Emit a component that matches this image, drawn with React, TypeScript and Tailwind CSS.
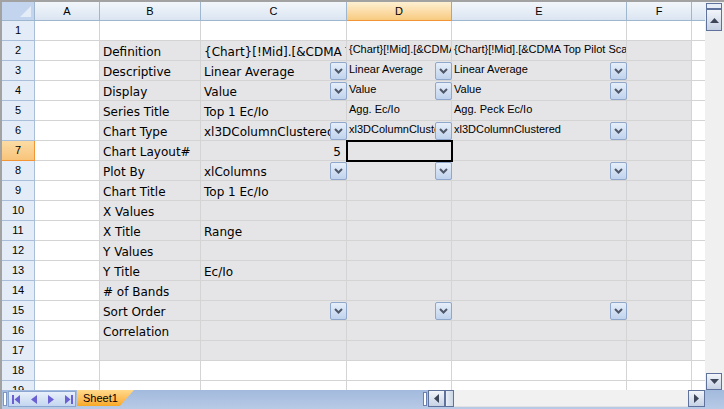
import React from "react";

type Cell = { t?: string; dd?: boolean; sm?: boolean; right?: boolean };

const W: Record<string, string> = {
  A: "w-[65px]",
  B: "w-[101px]",
  C: "w-[146px]",
  D: "w-[105px]",
  E: "w-[175px]",
  F: "w-[65px]",
};
const COLS = ["A", "B", "C", "D", "E", "F"];

const SPEC = "{Chart}[!Mid].[&CDMA Top Pilot Scan]";

const data: Record<number, Record<string, Cell>> = {
  2: { B: { t: "Definition" }, C: { t: SPEC }, D: { t: SPEC, sm: true }, E: { t: SPEC, sm: true } },
  3: {
    B: { t: "Descriptive" },
    C: { t: "Linear Average", dd: true },
    D: { t: "Linear Average", sm: true, dd: true },
    E: { t: "Linear Average", sm: true, dd: true },
  },
  4: {
    B: { t: "Display" },
    C: { t: "Value", dd: true },
    D: { t: "Value", sm: true, dd: true },
    E: { t: "Value", sm: true, dd: true },
  },
  5: {
    B: { t: "Series Title" },
    C: { t: "Top 1 Ec/Io" },
    D: { t: "Agg. Ec/Io", sm: true },
    E: { t: "Agg. Peck Ec/Io", sm: true },
  },
  6: {
    B: { t: "Chart Type" },
    C: { t: "xl3DColumnClustered", dd: true },
    D: { t: "xl3DColumnClustered", sm: true, dd: true },
    E: { t: "xl3DColumnClustered", sm: true, dd: true },
  },
  7: { B: { t: "Chart Layout#" }, C: { t: "5", right: true } },
  8: { B: { t: "Plot By" }, C: { t: "xlColumns", dd: true }, D: { dd: true }, E: { dd: true } },
  9: { B: { t: "Chart Title" }, C: { t: "Top 1 Ec/Io" } },
  10: { B: { t: "X Values" } },
  11: { B: { t: "X Title" }, C: { t: "Range" } },
  12: { B: { t: "Y Values" } },
  13: { B: { t: "Y Title" }, C: { t: "Ec/Io" } },
  14: { B: { t: "# of Bands" } },
  15: { B: { t: "Sort Order" }, C: { dd: true }, D: { dd: true }, E: { dd: true } },
  16: { B: { t: "Correlation" } },
  17: {},
};

function Dropdown() {
  return (
    <div className="absolute right-[-1px] top-[1px] z-10 flex h-[18px] w-[17px] items-center justify-center rounded-[2px] border border-[#8ea7cb] bg-linear-to-b from-[#e6eef9] to-[#c0d3ed]">
      <svg width="9" height="6" viewBox="0 0 9 6">
        <path d="M1 1 L4.5 4.5 L8 1" stroke="#4f5869" strokeWidth="2" fill="none" />
      </svg>
    </div>
  );
}

function GridCell({ col, row }: { col: string; row: number }) {
  const gray = row >= 2 && row <= 17 && col !== "A";
  const cell = data[row]?.[col];
  const sel = row === 7 && col === "D";
  return (
    <div
      className={`relative flex h-full shrink-0 border-b border-r border-[#d4d4d4] ${W[col]} ${
        gray ? "bg-[#e5e5e7]" : "bg-white"
      }`}
    >
      {cell?.t &&
        (cell.sm ? (
          <div className="w-full overflow-hidden whitespace-nowrap pl-[2px] pt-[2px] font-['Liberation_Sans'] text-[11px] leading-[13px]">
            {cell.t}
          </div>
        ) : (
          <div
            className={`flex w-full items-end overflow-hidden whitespace-nowrap pb-[1px] text-[12px] leading-[14px] ${
              cell.right ? "justify-end pr-[5px]" : "pl-[3px]"
            }`}
          >
            {cell.t}
          </div>
        ))}
      {cell?.dd && <Dropdown />}
      {sel && <div className="absolute -bottom-[2px] -left-[1px] -right-[2px] -top-[1px] z-20 border-2 border-black" />}
    </div>
  );
}

function Tri({ dir, color = "#3d4658" }: { dir: "l" | "r" | "u" | "d"; color?: string }) {
  const d = {
    l: "M5 0 L0 4.5 L5 9Z",
    r: "M0 0 L5 4.5 L0 9Z",
    u: "M0 5 L4.5 0 L9 5Z",
    d: "M0 0 L4.5 5 L9 0Z",
  }[dir];
  const horiz = dir === "l" || dir === "r";
  return (
    <svg width={horiz ? 5 : 9} height={horiz ? 9 : 5} viewBox={horiz ? "0 0 5 9" : "0 0 9 5"}>
      <path d={d} fill={color} />
    </svg>
  );
}

function ScrollBtn({ dir, cls }: { dir: "l" | "r" | "u" | "d"; cls: string }) {
  return (
    <div
      className={`flex shrink-0 items-center justify-center border border-[#5f729b] bg-linear-to-b from-[#f2f5fa] to-[#c6d2e4] ${cls}`}
    >
      <Tri dir={dir} />
    </div>
  );
}

export default function App() {
  const rows = Array.from({ length: 19 }, (_, i) => i + 1);
  const nav = "#6a5fd3";
  return (
    <div className="flex h-[409px] w-[724px] flex-col overflow-hidden border-l-2 border-t-2 border-[#a2a2a2] bg-white font-['DejaVu_Sans'] text-black">
      <div className="flex min-h-0 flex-1">
        {/* grid */}
        <div className="flex min-w-0 flex-1 flex-col overflow-hidden">
          <div className="flex h-[19px] shrink-0 font-['Liberation_Sans'] text-[11px]">
            <div className="relative w-[33px] shrink-0 border-b border-r border-[#9eb6ce] bg-[#c3d5ee]">
              <div className="absolute bottom-[3px] right-[3px] h-0 w-0 border-b-[11px] border-l-[11px] border-b-[#e4ecf8] border-l-transparent" />
            </div>
            {COLS.map((c) => (
              <div
                key={c}
                className={`flex shrink-0 items-center justify-center border-b border-r ${W[c]} ${
                  c === "D"
                    ? "border-[#f29536] bg-linear-to-b from-[#fef0d2] to-[#f8ca7f]"
                    : "border-[#9eb6ce] bg-linear-to-b from-[#f2f6fb] to-[#dbe5f2]"
                }`}
              >
                {c}
              </div>
            ))}
            <div className="flex-1 border-b border-[#9eb6ce] bg-linear-to-b from-[#f2f6fb] to-[#dbe5f2]" />
          </div>
          {rows.map((r) => (
            <div key={r} className="flex h-[20px] shrink-0">
              <div
                className={`flex w-[33px] shrink-0 items-center justify-center border-b border-r font-['Liberation_Sans'] text-[11px] ${
                  r === 7
                    ? "border-[#f29536] bg-linear-to-b from-[#fbdca4] to-[#f8c47a]"
                    : "border-[#a9bfd9] bg-[#e4ecf7]"
                }`}
              >
                {r}
              </div>
              {COLS.map((c) => (
                <GridCell key={c} col={c} row={r} />
              ))}
              <div className="flex-1 border-b border-[#d4d4d4] bg-white" />
            </div>
          ))}
        </div>
        {/* vertical scrollbar */}
        <div className="flex w-[19px] shrink-0 flex-col bg-[#f0f0f0]">
          <div className="ml-[1px] mt-[1px] h-[6px] w-[16px] border border-[#5f729b] bg-[#e8eef7]" />
          <ScrollBtn dir="u" cls="ml-[1px] h-[22px] w-[16px]" />
          <div className="flex-1" />
          <ScrollBtn dir="d" cls="ml-[1px] h-[17px] w-[16px]" />
        </div>
      </div>
      {/* sheet bar */}
      <div className="flex h-[19px] shrink-0 bg-linear-to-b from-[#a2badd] to-[#b8cae6]">
        <div className="ml-[1px] mt-[2px] h-[14px] w-[4px] border border-[#7d96c2] bg-white" />
        <div className="ml-[1px] mt-[1px] flex h-[16px] w-[68px] items-center gap-[11px] border border-[#8aa5cf] bg-linear-to-b from-[#e8f0fa] to-[#c4d6ef] pl-[3px]">
          <svg width="8" height="9" viewBox="0 0 8 9">
            <rect x="0" y="0" width="2" height="9" fill={nav} />
            <path d="M8 0 L2.5 4.5 L8 9Z" fill={nav} />
          </svg>
          <svg width="6" height="9" viewBox="0 0 6 9">
            <path d="M6 0 L0 4.5 L6 9Z" fill={nav} />
          </svg>
          <svg width="6" height="9" viewBox="0 0 6 9">
            <path d="M0 0 L6 4.5 L0 9Z" fill={nav} />
          </svg>
          <svg width="8" height="9" viewBox="0 0 8 9">
            <path d="M0 0 L5.5 4.5 L0 9Z" fill={nav} />
            <rect x="6" y="0" width="2" height="9" fill={nav} />
          </svg>
        </div>
        <div className="ml-[1px] flex h-[16px] w-[57px] items-center bg-linear-to-b from-[#ffd98a] to-[#f9a91e] pl-[6px] font-['Liberation_Sans'] text-[11px] [clip-path:polygon(0_0,100%_0,75%_100%,0_100%)]">
          Sheet1
        </div>
        <div className="flex-1" />
        <div className="mt-[2px] h-[14px] w-[4px] border border-[#6a82b0] bg-white" />
        <ScrollBtn dir="l" cls="ml-[1px] h-[17px] w-[17px]" />
        <div className="h-[17px] w-[9px] shrink-0 border border-[#5f729b] bg-linear-to-r from-[#e9eef6] to-[#c9d5e6]" />
        <div className="h-[17px] w-[234px] shrink-0 border-b border-[#e2e2e2] bg-[#f1f1f1]" />
        <ScrollBtn dir="r" cls="h-[17px] w-[17px]" />
        <div className="w-[19px] shrink-0" />
      </div>
    </div>
  );
}
